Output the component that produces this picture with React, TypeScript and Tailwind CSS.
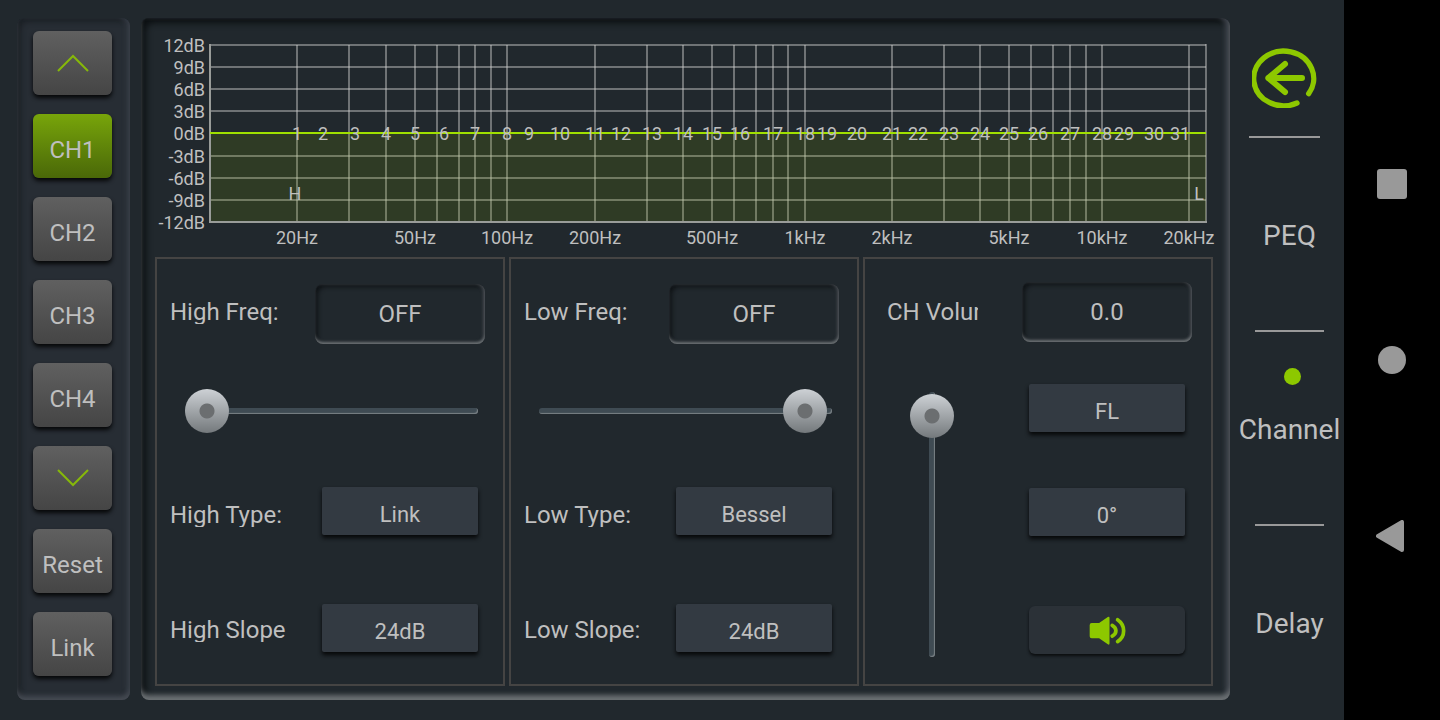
import { useState } from 'react';
import type { ReactNode } from 'react';
import clsx from 'clsx';

// Plot coordinates: 0/0 is the top left corner of the grid
const PLOT_WIDTH = 996;
const PLOT_HEIGHT = 177;
const ZERO_DB = 88;

const gainLines = [
  { y: 0, label: '12dB' },
  { y: 22, label: '9dB' },
  { y: 44, label: '6dB' },
  { y: 66, label: '3dB' },
  { y: 88, label: '0dB' },
  { y: 111, label: '-3dB' },
  { y: 133, label: '-6dB' },
  { y: 155, label: '-9dB' },
  { y: 177, label: '-12dB' },
];

const freqLines = [
  87, 139, 176, 205, 227, 249, 265, 281, 297, 385, 437, 473, 502, 524, 546, 563,
  578, 595, 682, 734, 770, 799, 821, 843, 860, 876, 892, 979,
];

const freqLabels = [
  { x: 87, label: '20Hz' },
  { x: 205, label: '50Hz' },
  { x: 297, label: '100Hz' },
  { x: 385, label: '200Hz' },
  { x: 502, label: '500Hz' },
  { x: 595, label: '1kHz' },
  { x: 682, label: '2kHz' },
  { x: 799, label: '5kHz' },
  { x: 892, label: '10kHz' },
  { x: 979, label: '20kHz' },
];

// Position of the 31 EQ bands, from low to high
const bands = [
  87, 113, 145, 176, 205, 234, 265, 297, 319, 350, 385, 411, 442, 473, 502, 530,
  563, 595, 617, 647, 682, 708, 739, 770, 799, 828, 860, 892, 914, 944, 970,
];

const channels = ['CH1', 'CH2', 'CH3', 'CH4'];
const pages = ['PEQ', 'Channel', 'Delay'];

const EqChart = () => (
  <svg
    viewBox="-55 -27 1058 239"
    className="block w-full overflow-visible"
    role="img"
    aria-label="Frequency response"
  >
    <g stroke="#cfcfcf" strokeOpacity="0.45" strokeWidth="2">
      {gainLines.map(({ y }) => (
        <line key={y} x1="0" x2={PLOT_WIDTH} y1={y} y2={y} />
      ))}
      {freqLines.map((x) => (
        <line key={x} x1={x} x2={x} y1="0" y2={PLOT_HEIGHT} />
      ))}
      <line x1={PLOT_WIDTH} x2={PLOT_WIDTH} y1="-1" y2={PLOT_HEIGHT + 1} />
    </g>
    <rect
      y={ZERO_DB}
      width={PLOT_WIDTH}
      height={PLOT_HEIGHT - ZERO_DB}
      fill="#7ca000"
      fillOpacity="0.16"
    />
    <path
      d={`M0 -1V${PLOT_HEIGHT}H${PLOT_WIDTH + 1}`}
      fill="none"
      stroke="#999c99"
      strokeWidth="2"
    />
    <line
      x2={PLOT_WIDTH}
      y1={ZERO_DB}
      y2={ZERO_DB}
      stroke="#a0e000"
      strokeWidth="2"
    />
    <g fill="#bfbfbf" fontSize="18">
      {gainLines.map(({ y, label }) => (
        <text key={label} x="-5" y={y + 7} textAnchor="end">
          {label}
        </text>
      ))}
      <g textAnchor="middle">
        {freqLabels.map(({ x, label }) => (
          <text key={label} x={x} y="199">
            {label}
          </text>
        ))}
        {bands.map((x, index) => (
          <text key={x} x={x} y={ZERO_DB + 7}>
            {index + 1}
          </text>
        ))}
        <text x="85" y="155">
          H
        </text>
        <text x="989" y="155">
          L
        </text>
      </g>
    </g>
  </svg>
);

type SideButtonProps = {
  children: ReactNode;
  active?: boolean;
  label?: string;
  onClick?: () => void;
};

const SideButton = ({ children, active, label, onClick }: SideButtonProps) => (
  <button
    type="button"
    aria-label={label}
    onClick={onClick}
    className={clsx(
      'flex h-16 w-[79px] items-center justify-center rounded-md bg-linear-to-b text-2xl leading-6 shadow-[0_3px_4px_#060708]',
      active ? 'from-[#78a50a] to-[#4a6808]' : 'from-[#606060] to-[#454545]',
      !label && 'pt-2',
    )}
  >
    {children}
  </button>
);

const Chevron = ({ d }: { d: string }) => (
  <svg viewBox="0 0 32 18" className="h-[18px] w-8" fill="none">
    <path d={d} stroke="#86b80a" strokeWidth="2" />
  </svg>
);

const FieldLabel = ({ id, children }: { id: string; children: ReactNode }) => (
  <label
    htmlFor={id}
    className="w-[116px] overflow-hidden text-2xl leading-6 whitespace-nowrap"
  >
    {children}
  </label>
);

const ValueBox = ({ id, value }: { id: string; value: string }) => (
  <input
    id={id}
    type="text"
    defaultValue={value}
    className="h-[60px] w-[170px] rounded-lg text-center text-2xl leading-6 shadow-[inset_0_-3px_3px_-1px_#6b7073,inset_-2px_0_3px_#43484d,inset_3px_3px_4px_#101417] outline-none"
  />
);

type PickerProps = {
  id?: string;
  label?: string;
  options: string[];
};

const Picker = ({ id, label, options }: PickerProps) => (
  <select
    id={id}
    aria-label={label}
    className="h-12 w-[156px] appearance-none rounded-xs bg-[#333a42] pt-2 text-center text-[22px] leading-6 shadow-[0_3px_4px_#060708] outline-none [text-align-last:center]"
  >
    {options.map((option) => (
      <option key={option}>{option}</option>
    ))}
  </select>
);

const thumb =
  '[&::-webkit-slider-thumb]:size-11 [&::-webkit-slider-thumb]:appearance-none [&::-webkit-slider-thumb]:rounded-full [&::-webkit-slider-thumb]:bg-[radial-gradient(circle,#6b6e70_0_7px,transparent_8px),linear-gradient(#cdd1d5,#74797c)]';

type CrossoverProps = {
  name: string;
  freq: number;
  type: string;
};

const Crossover = ({ name, freq, type }: CrossoverProps) => {
  const id = name.toLowerCase();

  return (
    <section className="flex flex-col border-2 border-[#454443] pt-[25px] pl-[13px]">
      <div className="flex items-center justify-between pr-[18px]">
        <div className="mb-1 flex">
          <FieldLabel id={`${id}-freq`}>{name} Freq:</FieldLabel>
        </div>
        <ValueBox id={`${id}-freq`} value="OFF" />
      </div>
      <div className="mt-[45px] flex pr-[25px] pl-[15px]">
        <input
          type="range"
          aria-label={`${name} frequency`}
          defaultValue={freq}
          className={clsx(
            thumb,
            'h-11 w-full appearance-none bg-transparent [&::-webkit-slider-runnable-track]:h-[6px] [&::-webkit-slider-runnable-track]:rounded-full [&::-webkit-slider-runnable-track]:bg-[#3f4b53] [&::-webkit-slider-runnable-track]:shadow-[inset_-1px_-1px_1px_#7b8286] [&::-webkit-slider-thumb]:-mt-[19px]',
          )}
        />
      </div>
      <div className="mt-[54px] flex items-center justify-between pr-[25px]">
        <div className="mt-2 flex">
          <FieldLabel id={`${id}-type`}>{name} Type:</FieldLabel>
        </div>
        <Picker id={`${id}-type`} options={[type, 'Butterworth']} />
      </div>
      <div className="mt-[69px] flex items-center justify-between pr-[25px]">
        <div className="mt-1 flex">
          <FieldLabel id={`${id}-slope`}>{name} Slope:</FieldLabel>
        </div>
        <Picker id={`${id}-slope`} options={['24dB', '12dB']} />
      </div>
    </section>
  );
};

const ChannelOutput = () => (
  <section className="flex flex-col border-2 border-[#454443] pt-[23px]">
    <div className="flex items-center justify-between pr-[19px] pl-[22px]">
      <div className="flex w-[91px] overflow-hidden">
        <FieldLabel id="volume">CH Volume:</FieldLabel>
      </div>
      <ValueBox id="volume" value="0.0" />
    </div>
    <div className="mt-[42px] flex justify-between pr-[26px] pl-[45px]">
      <input
        type="range"
        aria-label="Channel volume"
        defaultValue={99}
        className={clsx(
          thumb,
          'mt-2 h-[265px] w-11 appearance-none bg-transparent [direction:rtl] [writing-mode:vertical-lr] [&::-webkit-slider-runnable-track]:w-[6px] [&::-webkit-slider-runnable-track]:rounded-full [&::-webkit-slider-runnable-track]:bg-[#3f4b53] [&::-webkit-slider-runnable-track]:shadow-[inset_-1px_-1px_1px_#7b8286] [&::-webkit-slider-thumb]:-ml-[19px]',
        )}
      />
      <div className="flex flex-col">
        <Picker label="Output" options={['FL', 'FR', 'RL', 'RR']} />
        <button
          type="button"
          className="mt-14 h-12 w-[156px] rounded-xs bg-[#333a42] pt-2 text-[22px] leading-6 shadow-[0_3px_4px_#060708]"
        >
          0°
        </button>
        <button
          type="button"
          aria-label="Mute"
          className="mt-[70px] flex h-12 w-[156px] items-center justify-center rounded-md bg-[#2b3137] shadow-[0_2px_3px_#0b0d0f]"
        >
          <svg viewBox="686 436 110 86" className="h-[29px] w-[37px]">
            <path
              d="M694 457H716L742 439Q747 436 747 442V517Q747 523 742 520L716 502H694Q688 502 688 496V463Q688 457 694 457Z"
              fill="#8dc800"
            />
            <path
              d="M755 464Q766 470 766 480T755 496M771 447Q789 459 789 480T771 512"
              fill="none"
              stroke="#8dc800"
              strokeWidth="11"
              strokeLinecap="round"
            />
          </svg>
        </button>
      </div>
    </div>
  </section>
);

export default function App() {
  const [channel, setChannel] = useState('CH1');
  const [page, setPage] = useState('Channel');

  return (
    <div className="flex min-h-screen bg-[#21282d] font-[Roboto,sans-serif] text-[#bfbfbf]">
      <aside className="mt-[18px] mb-5 ml-[17px] flex w-[113px] shrink-0 flex-col items-center gap-[19px] rounded-lg bg-[#272d34] pt-[13px] pr-[2px] shadow-[inset_0_-5px_5px_-1px_#454a52,inset_-5px_0_4px_-1px_#323841,inset_4px_4px_5px_#1c2126]">
        <SideButton label="Previous channels">
          <Chevron d="M1 17L16 2L31 17" />
        </SideButton>
        {channels.map((name) => (
          <SideButton
            key={name}
            active={name === channel}
            onClick={() => setChannel(name)}
          >
            {name}
          </SideButton>
        ))}
        <SideButton label="Next channels">
          <Chevron d="M1 1L16 16L31 1" />
        </SideButton>
        <SideButton>Reset</SideButton>
        <SideButton>Link</SideButton>
      </aside>

      <main className="mt-[18px] mb-5 ml-[11px] flex flex-1 flex-col rounded-lg pr-[17px] pb-[14px] pl-[14px] shadow-[inset_0_-6px_5px_-1px_#6b7073,inset_-6px_0_4px_-1px_#3a3f47,inset_5px_5px_6px_#0c1012]">
        <EqChart />
        <div className="grid flex-1 grid-cols-3 gap-1">
          <Crossover name="High" freq={0} type="Link" />
          <Crossover name="Low" freq={98} type="Bessel" />
          <ChannelOutput />
        </div>
      </main>

      <nav className="flex w-[114px] shrink-0 flex-col pt-12">
        <div className="flex flex-col items-center gap-7 pr-[6px]">
          <button type="button" aria-label="Back">
            <svg
              viewBox="93 84 195 180"
              className="h-[60px] w-[65px]"
              fill="none"
              stroke="#8dc800"
              strokeLinecap="round"
              strokeLinejoin="round"
            >
              <path d="M263 221A90 82 0 1 0 228 249" strokeWidth="16" />
              <path
                d="M243 174H142M192 132L142 174L192 216"
                strokeWidth="18"
              />
            </svg>
          </button>
          <hr className="w-[71px] border-t-2 border-[#999]" />
        </div>
        {pages.map((name, index) => (
          <div key={name} className="flex flex-col items-center pl-1">
            {index > 0 && <hr className="w-[69px] border-t-2 border-[#999]" />}
            <a
              href={`#${name.toLowerCase()}`}
              onClick={() => setPage(name)}
              className="relative flex h-48 w-full items-center justify-center pt-1 pl-px text-[28px] leading-8"
            >
              {name === page && (
                <span className="absolute top-9 left-[50px] size-[17px] rounded-full bg-[#8dc800]" />
              )}
              {name}
            </a>
          </div>
        ))}
      </nav>

      {/* Android system buttons */}
      <div className="flex w-24 shrink-0 flex-col items-center justify-center gap-32 bg-black">
        <button
          type="button"
          aria-label="Recent apps"
          className="flex size-12 items-center justify-center"
        >
          <span className="size-[30px] rounded-[3px] bg-[#999]" />
        </button>
        <button
          type="button"
          aria-label="Home"
          className="flex size-12 items-center justify-center"
        >
          <span className="size-7 rounded-full bg-[#999]" />
        </button>
        <button
          type="button"
          aria-label="System back"
          className="flex size-12 items-center justify-center pr-1"
        >
          <svg viewBox="0 0 28 32" className="h-8 w-7">
            <path
              d="M2 16L26 2V30Z"
              fill="#999"
              stroke="#999"
              strokeWidth="4"
              strokeLinejoin="round"
            />
          </svg>
        </button>
      </div>
    </div>
  );
}
